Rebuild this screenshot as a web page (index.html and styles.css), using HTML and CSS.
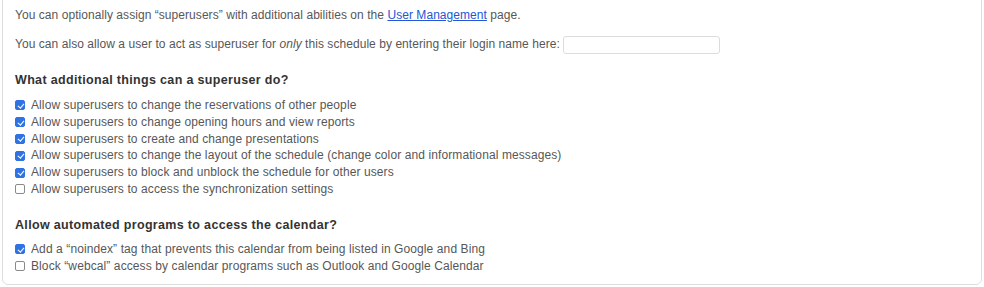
FILE: index.html
```html
<!DOCTYPE html>
<html lang="en">
<head>
<meta charset="utf-8">
<title>Superuser settings</title>
<link rel="stylesheet" href="styles.css">
</head>
<body>
<div class="card">
  <p class="text">You can optionally assign “superusers” with additional abilities on the <a href="#" class="link">User Management</a> page.</p>
  <p class="text">You can also allow a user to act as superuser for <em>only</em> this schedule by entering their login name here: <input type="text" class="login-input"></p>

  <h3 class="heading">What additional things can a superuser do?</h3>
  <ul class="options">
    <li class="option"><input type="checkbox" class="check" checked><span>Allow superusers to change the reservations of other people</span></li>
    <li class="option"><input type="checkbox" class="check" checked><span>Allow superusers to change opening hours and view reports</span></li>
    <li class="option"><input type="checkbox" class="check" checked><span>Allow superusers to create and change presentations</span></li>
    <li class="option"><input type="checkbox" class="check" checked><span>Allow superusers to change the layout of the schedule (change color and informational messages)</span></li>
    <li class="option"><input type="checkbox" class="check" checked><span>Allow superusers to block and unblock the schedule for other users</span></li>
    <li class="option"><input type="checkbox" class="check"><span>Allow superusers to access the synchronization settings</span></li>
  </ul>

  <h3 class="heading heading-second">Allow automated programs to access the calendar?</h3>
  <ul class="options options-second">
    <li class="option"><input type="checkbox" class="check" checked><span>Add a “noindex” tag that prevents this calendar from being listed in Google and Bing</span></li>
    <li class="option"><input type="checkbox" class="check"><span>Block “webcal” access by calendar programs such as Outlook and Google Calendar</span></li>
  </ul>
</div>
</body>
</html>
```
FILE: styles.css
```css
html, body {
  margin: 0;
  padding: 0;
  background: #ffffff;
  overflow: hidden;
}

body {
  font-family: "Liberation Sans", Arial, sans-serif;
  font-size: 12px;
  color: #575757;
}

.card {
  margin: -8px 2px 0 2px;
  padding: 14px 12px 10px 12px;
  border: 1px solid #dedede;
  border-radius: 6px;
  background: #ffffff;
}

.text {
  margin: 0 0 12px 0;
  line-height: 17px;
  letter-spacing: 0.055px;
}

.text em {
  font-style: italic;
}

.link {
  color: #2456d6;
  text-decoration: underline;
}

.login-input {
  box-sizing: border-box;
  width: 157px;
  height: 18px;
  margin: 0;
  padding: 0 4px;
  border: 1px solid #dcdcdc;
  border-radius: 3px;
  vertical-align: middle;
  font: inherit;
}

.heading {
  margin: 18px 0 0 0;
  font-size: 12.5px;
  letter-spacing: 0.33px;
  line-height: 17px;
  font-weight: bold;
  color: #333333;
}

.heading-second {
  margin-top: 19px;
}

.options {
  list-style: none;
  margin: 8px 0 0 0;
  padding: 0;
}

.options-second {
  margin-top: 7px;
}

.option {
  display: flex;
  align-items: center;
  gap: 6px;
  line-height: 16.8px;
  letter-spacing: 0.1px;
}

.check {
  appearance: none;
  -webkit-appearance: none;
  position: relative;
  box-sizing: border-box;
  width: 10px;
  height: 10px;
  margin: 0;
  border: 1px solid #8a8a8a;
  border-radius: 2px;
  background: #ffffff;
  flex: none;
}

.check:checked {
  background: #2f72e3;
  border-color: #2f72e3;
}

.check:checked::after {
  content: "";
  position: absolute;
  left: 2.5px;
  top: 0.5px;
  width: 2.5px;
  height: 5px;
  border: solid #ffffff;
  border-width: 0 1.5px 1.5px 0;
  transform: rotate(40deg);
}
```
